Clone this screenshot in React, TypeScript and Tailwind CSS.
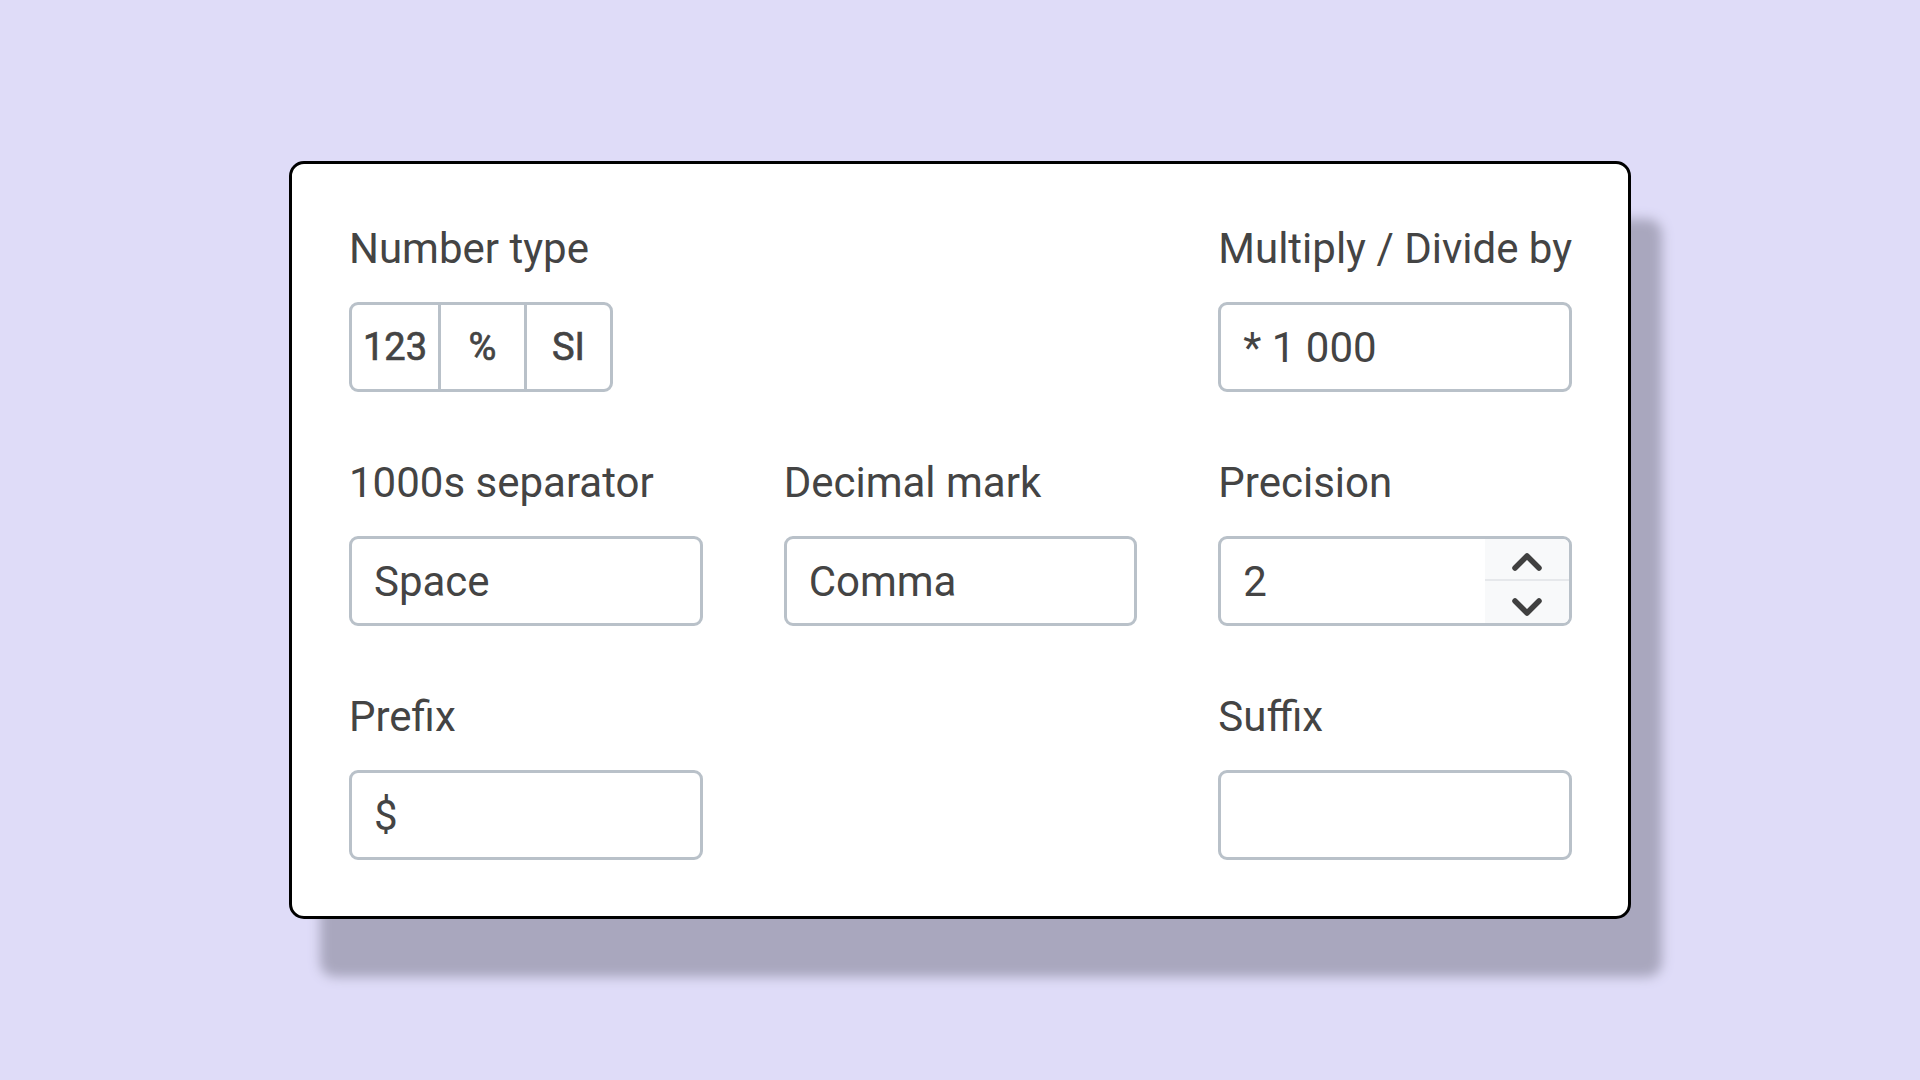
const Label = ({ children }: { children: React.ReactNode }) => (
  <div className="text-[42px] leading-[50px] text-[#444444] mb-[28px] whitespace-nowrap">{children}</div>
);

const TextBox = ({ value }: { value?: string }) => (
  <div className="h-[90px] border-[3px] border-[#b9c1c9] rounded-[9px] flex items-center pl-[22px] text-[42px] text-[#444444] whitespace-pre">
    {value}
  </div>
);

const Chevron = ({ up }: { up?: boolean }) => (
  <svg width="32" height="20" viewBox="0 0 32 20" fill="none" stroke="#404040" strokeWidth="5.5" strokeLinecap="round" strokeLinejoin="round">
    <polyline points={up ? '4,16 16,4 28,16' : '4,4 16,16 28,4'} />
  </svg>
);

const TYPES = ['123', '%', 'SI'];

export default function App() {
  return (
    <div
      className="min-h-screen w-full bg-[#dfdcf8] flex items-center justify-center"
      style={{ fontFamily: 'Roboto, "Noto Sans", sans-serif' }}
    >
      <div className="w-[1342px] bg-white border-[3px] border-black rounded-[15px] shadow-[31px_58px_12px_0_#a9a7be] pt-[60px] pb-[56px] pl-[57px] pr-[56px]">
        <div className="grid grid-cols-3 gap-x-[81px] gap-y-[66px]">
          {/* row 1 */}
          <div>
            <Label>Number type</Label>
            <div className="inline-flex h-[90px] border-[3px] border-[#b9c1c9] rounded-[9px] overflow-hidden">
              {TYPES.map((t, i) => (
                <div
                  key={t}
                  className={`w-[86px] flex items-center justify-center text-[38px] text-[#444444] [-webkit-text-stroke:0.7px_#444444] ${i > 0 ? 'border-l-[3px] border-[#b9c1c9]' : ''}`}
                >
                  {t}
                </div>
              ))}
            </div>
          </div>
          <div />
          <div>
            <Label>Multiply / Divide by</Label>
            <TextBox value="* 1 000" />
          </div>

          {/* row 2 */}
          <div>
            <Label>1000s separator</Label>
            <TextBox value="Space" />
          </div>
          <div>
            <Label>Decimal mark</Label>
            <TextBox value="Comma" />
          </div>
          <div>
            <Label>Precision</Label>
            <div className="h-[90px] border-[3px] border-[#b9c1c9] rounded-[9px] flex overflow-hidden text-[42px] text-[#444444]">
              <div className="flex-1 flex items-center pl-[22px]">2</div>
              <div className="w-[84px] flex flex-col bg-[#f8f9fa]">
                <div className="flex-1 flex items-center justify-center border-b-2 border-[#e6e8eb] pt-[7px]">
                  <Chevron up />
                </div>
                <div className="flex-1 flex items-center justify-center pt-[10px]">
                  <Chevron />
                </div>
              </div>
            </div>
          </div>

          {/* row 3 */}
          <div>
            <Label>Prefix</Label>
            <TextBox value="$" />
          </div>
          <div />
          <div>
            <Label>Suffix</Label>
            <TextBox />
          </div>
        </div>
      </div>
    </div>
  );
}
